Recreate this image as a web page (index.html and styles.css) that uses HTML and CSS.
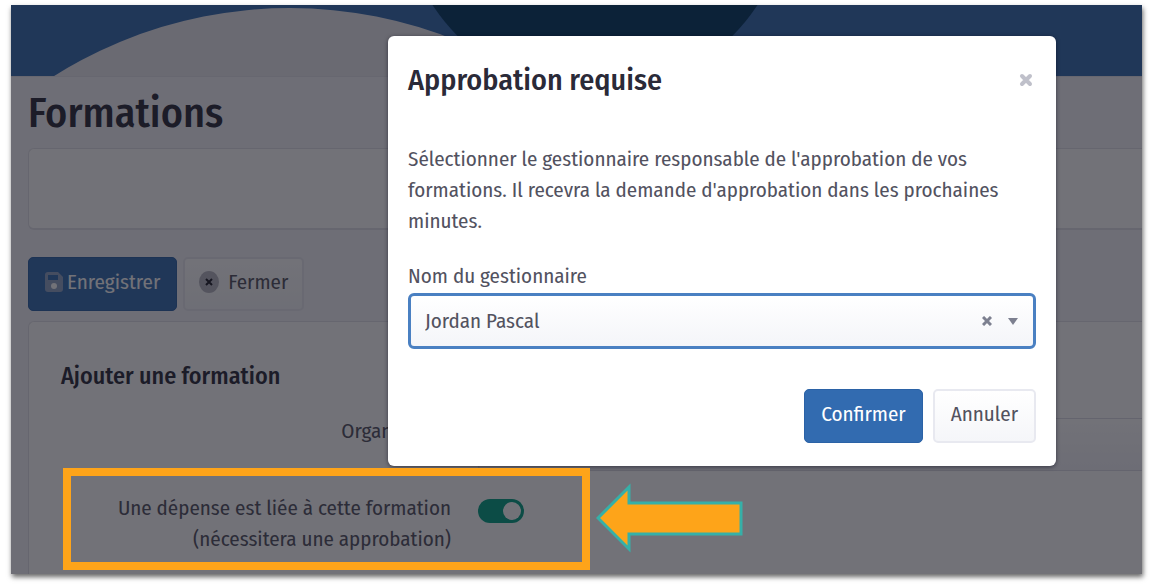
FILE: index.html
```html
<!DOCTYPE html>
<html lang="fr">
<head>
  <meta charset="UTF-8" />
  <title>Formations</title>
  <meta name="viewport" content="width=device-width, initial-scale=1.0" />
  <link rel="stylesheet" href="styles.css">
</head>
<body>
  <div class="screen">
    <header class="banner">
      <svg width="1131" height="71" viewBox="0 0 1131 71" aria-hidden="true">
        <circle cx="279" cy="446" r="443" fill="#ebebf0" />
        <circle cx="584" cy="-106" r="194" fill="#00375f" />
      </svg>
    </header>

    <main class="content">
      <h1>Formations</h1>
      <div class="panel summary"></div>

      <div class="toolbar">
        <button type="button" class="btn btn-primary btn-save">
          <svg width="18" height="20" viewBox="0 0 18 20" aria-hidden="true">
            <path d="M3 0h10l5 5v12a3 3 0 0 1-3 3H3a3 3 0 0 1-3-3V3a3 3 0 0 1 3-3z" fill="#8fa3c4" />
            <path d="M3 3h10v5H3z" fill="#326bb0" />
            <circle cx="9" cy="14" r="3" fill="#fff" />
          </svg>
          Enregistrer
        </button>
        <button type="button" class="btn btn-light btn-close">
          <svg width="20" height="22" viewBox="0 0 20 22" aria-hidden="true">
            <ellipse cx="10" cy="11" rx="10" ry="11" fill="#b4b4be" />
            <path d="M7 8l6 6M13 8l-6 6" stroke="#1c1c26" stroke-width="2" />
          </svg>
          Fermer
        </button>
      </div>

      <section class="panel form-card">
        <h2>Ajouter une formation</h2>
        <div class="form-row">
          <label for="organisation">Organisation</label>
          <input type="text" id="organisation" />
        </div>
        <div class="form-row expense">
          <label for="expense">Une dépense est liée à cette formation<br>(nécessitera une approbation)</label>
          <input type="checkbox" id="expense" class="switch" checked />
          <div class="highlight"></div>
          <svg class="arrow" width="147" height="70" viewBox="0 0 147 70" aria-hidden="true">
            <path d="M2 35L33 4v16h112v31H33v15z" fill="#fea419" stroke="#36b0a8" stroke-width="3" />
          </svg>
        </div>
      </section>
    </main>

    <div class="backdrop"></div>

    <div class="modal" role="dialog" aria-labelledby="modalTitle">
      <div class="modal-header">
        <h3 id="modalTitle">Approbation requise</h3>
        <button type="button" class="icon-btn" aria-label="Fermer la fenêtre">
          <svg width="14" height="14" viewBox="0 0 14 14" aria-hidden="true">
            <path d="M3 3l8 8M11 3l-8 8" stroke="#bfc0ca" stroke-width="4" stroke-linecap="round" />
          </svg>
        </button>
      </div>
      <p>Sélectionner le gestionnaire responsable de l'approbation de vos formations. Il recevra la demande d'approbation dans les prochaines minutes.</p>
      <label for="manager">Nom du gestionnaire</label>
      <div class="select-wrap">
        <select id="manager">
          <option selected>Jordan Pascal</option>
        </select>
        <div class="select-icons">
          <button type="button" class="icon-btn" aria-label="Effacer">
            <svg width="10" height="10" viewBox="0 0 10 10" aria-hidden="true">
              <path d="M1 1l8 8M9 1l-8 8" stroke="#7d8090" stroke-width="3" />
            </svg>
          </button>
          <svg width="10" height="7" viewBox="0 0 10 7" aria-hidden="true">
            <path d="M0 0h10L5 7z" fill="#7d8090" />
          </svg>
        </div>
      </div>
      <div class="modal-footer">
        <button type="button" class="btn btn-primary">Confirmer</button>
        <button type="button" class="btn btn-light">Annuler</button>
      </div>
    </div>
  </div>
</body>
</html>
```
FILE: styles.css
```css
* {
  box-sizing: border-box;
}

body {
  margin: 0;
  padding: 5px 8px 10px 11px;
  background: #fff;
  font-family: "Fira Sans Condensed", "Liberation Sans Narrow", Lato, sans-serif;
  font-size: 21px;
  line-height: 31px;
  color: #52525f;
}

h1,
h2,
h3,
p {
  margin: 0;
}

h1,
h2,
h3 {
  color: #2a2a38;
  font-weight: 500;
}

button,
input,
select {
  font: inherit;
  color: inherit;
}

.screen {
  position: relative;
  overflow: hidden;
  height: calc(100vh - 15px);
  min-height: 560px;
  background: #f5f5fa;
  box-shadow: 1px 3px 5px rgba(0, 0, 0, 0.6);
}

.banner {
  height: 71px;
  overflow: hidden;
  background: #326bb0;
}

.banner svg {
  display: block;
}

.content {
  padding: 12px 0 0 17px;
  border-top: 1px solid #e4e4ea;
}

h1 {
  font-size: 42px;
  line-height: 48px;
  margin-bottom: 11px;
}

.panel {
  background: #fff;
  border: 1px solid #e2e2e8;
  border-right: 0;
  border-radius: 6px 0 0 6px;
}

.summary {
  height: 82px;
  border-bottom-width: 2px;
}

.toolbar {
  display: flex;
  gap: 6px;
  margin: 27px 0 10px;
}

.btn {
  height: 54px;
  padding: 0 16px 4px;
  border: 1px solid transparent;
  border-radius: 5px;
  cursor: pointer;
}

.btn-primary {
  background: #326bb0;
  border-color: #2b62a6;
  color: #fff;
}

.btn-light {
  background: linear-gradient(#fff, #f5f6f9);
  border: 2px solid #e8e9f0;
}

.btn-save,
.btn-close {
  display: flex;
  align-items: center;
}

.btn-save {
  gap: 4px;
}

.btn-close {
  gap: 9px;
  padding: 0 14px 4px;
}

.form-card {
  padding: 39px 0 40px 32px;
}

h2 {
  font-size: 24px;
  line-height: 31px;
  margin-bottom: 24px;
}

.form-row {
  position: relative;
  display: grid;
  grid-template-columns: 390px 1fr;
  column-gap: 27px;
}

.form-row label {
  text-align: right;
}

.form-row input[type="text"] {
  width: 100%;
  height: 53px;
  margin-top: 2px;
  border: 1px solid #dcdce6;
  border-right: 0;
  border-radius: 5px 0 0 5px;
  background: linear-gradient(#fff, #f2f2f8);
}

.expense {
  padding-top: 22px;
}

.switch {
  appearance: none;
  width: 46px;
  height: 24px;
  margin: 6px 0 0;
  padding: 3px;
  border-radius: 12px;
  background: #00a082;
}

.switch::before {
  content: "";
  display: block;
  width: 18px;
  height: 18px;
  border-radius: 50%;
  background: #fff;
}

.switch:checked::before {
  margin-left: auto;
}

.highlight {
  position: absolute;
  z-index: 3;
  left: 2px;
  top: -3px;
  width: 527px;
  height: 102px;
  border: 8px solid #fea419;
}

.arrow {
  position: absolute;
  z-index: 3;
  left: 535px;
  top: 12px;
}

.backdrop {
  position: absolute;
  z-index: 1;
  inset: 0;
  background: rgba(20, 20, 30, 0.6);
}

.modal {
  position: absolute;
  z-index: 2;
  top: 31px;
  right: 86px;
  width: 668px;
  padding: 26px 20px 23px;
  border-radius: 6px;
  background: #fff;
  box-shadow: 0 1px 4px rgba(0, 0, 20, 0.5);
}

.modal-header {
  display: flex;
  justify-content: space-between;
  align-items: center;
  margin-bottom: 46px;
}

.modal-header .icon-btn {
  margin-right: 3px;
}

h3 {
  font-size: 30px;
  line-height: 36px;
}

.modal label {
  display: block;
  margin-top: 24px;
}

.icon-btn {
  display: flex;
  padding: 0;
  border: 0;
  background: none;
  cursor: pointer;
}

.select-wrap {
  position: relative;
  margin-top: 1px;
}

select {
  display: block;
  appearance: none;
  width: 100%;
  height: 56px;
  padding: 0 70px 0 14px;
  border: 3px solid #4a80c2;
  border-radius: 6px;
  background: linear-gradient(#fff, #f4f5f9);
}

.select-icons {
  position: absolute;
  top: 0;
  right: 18px;
  height: 100%;
  display: flex;
  align-items: center;
  gap: 16px;
}

.modal-footer {
  display: flex;
  justify-content: flex-end;
  gap: 10px;
  margin-top: 40px;
}
```
